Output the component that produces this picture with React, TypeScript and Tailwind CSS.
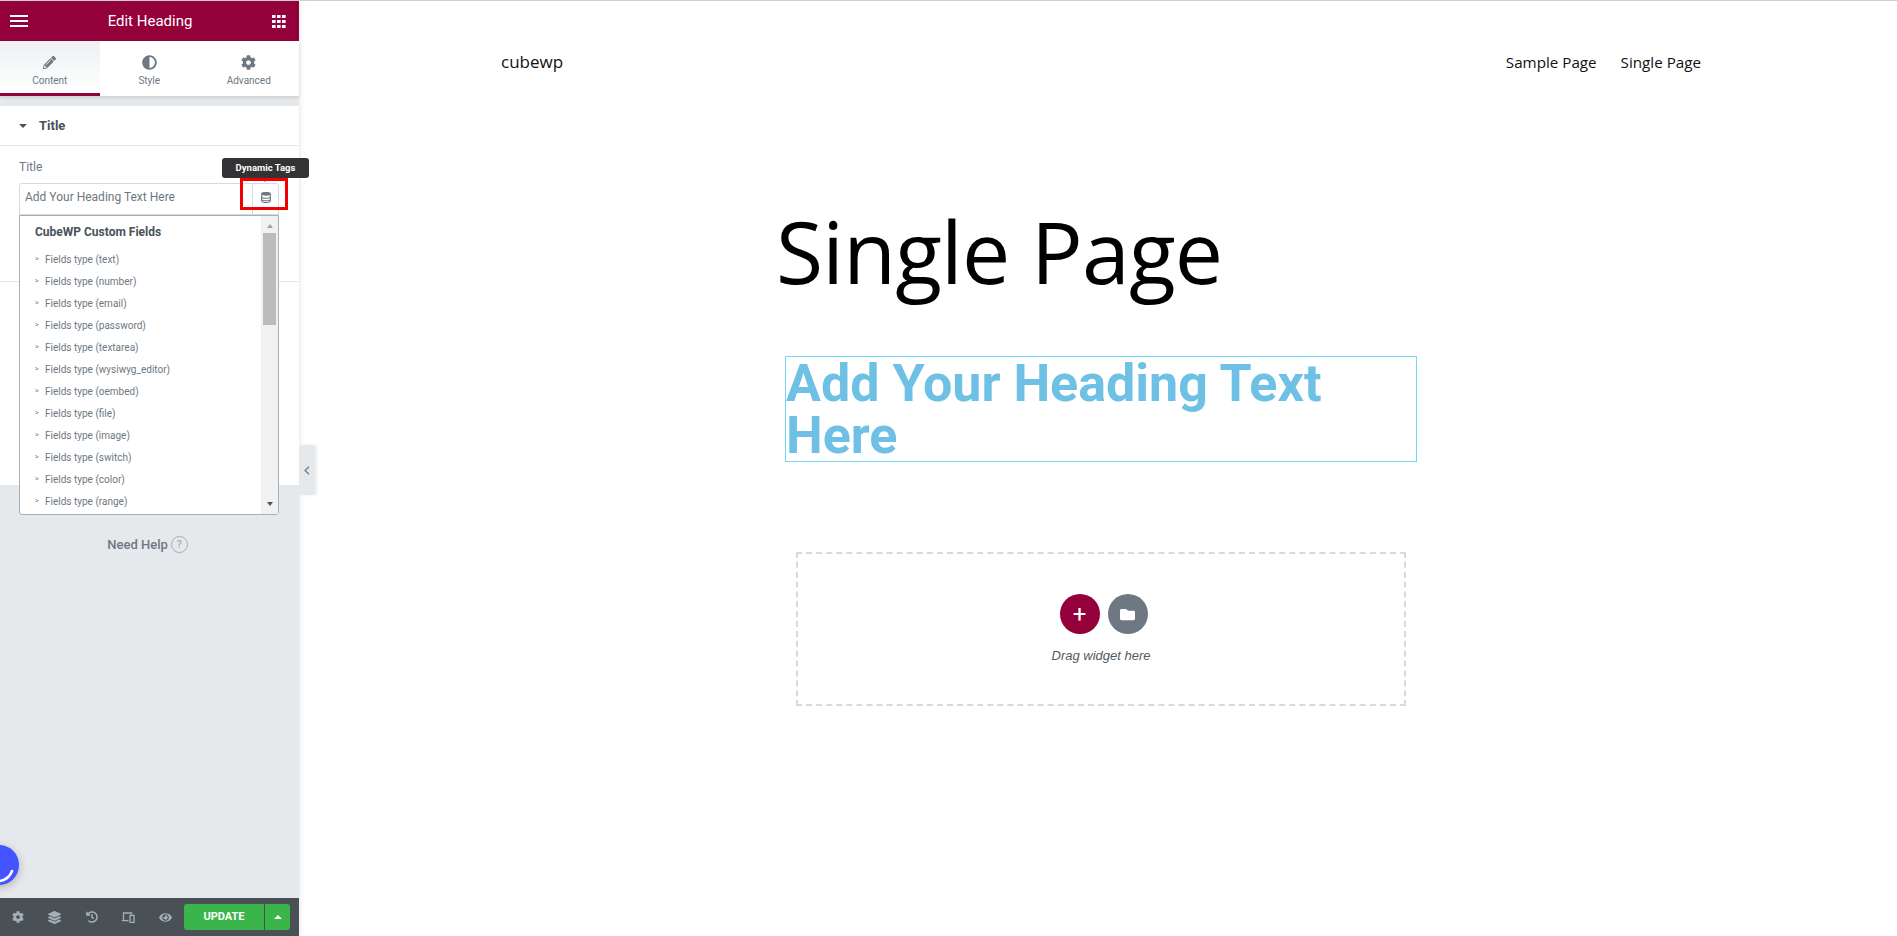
import { FaAdjust, FaCog, FaEye, FaFolder, FaHistory, FaLayerGroup, FaPencilAlt } from "react-icons/fa";

const fieldTypes = [
  "text",
  "number",
  "email",
  "password",
  "textarea",
  "wysiwyg_editor",
  "oembed",
  "file",
  "image",
  "switch",
  "color",
  "range",
];

function GridIcon() {
  return (
    <svg width="14" height="13" viewBox="0 0 14 13" fill="#fff">
      {[0, 5, 10].map((y) =>
        [0, 5, 10].map((x) => <rect key={`${x}-${y}`} x={x} y={y} width="3.6" height="3" />)
      )}
    </svg>
  );
}

function DevicesIcon() {
  return (
    <svg width="13" height="11" viewBox="0 0 13 11" fill="none" stroke="#a4afb7" strokeWidth="1.3">
      <path d="M1.5 8V1h8v1.5" />
      <path d="M0 8.6h6.5" />
      <rect x="8" y="3.4" width="4" height="7" />
    </svg>
  );
}

function StackIcon() {
  return (
    <svg width="10" height="11" viewBox="0 0 10 11" fill="none" stroke="#6d7882" strokeWidth="1.1">
      <ellipse cx="5" cy="1.8" rx="4.3" ry="1.3" fill="#6d7882" />
      <path d="M.7 2v7c0 .9 1.9 1.5 4.3 1.5S9.300 9.900 9.300 9V2" />
      <path d="M.7 4.700c0 .9 1.900 1.500 4.300 1.500s4.300-.6 4.300-1.500" />
      <path d="M.7 7.200c0 .9 1.900 1.500 4.300 1.500s4.300-.6 4.300-1.500" />
    </svg>
  );
}

function Tab({ label, active, icon }: { label: string; active?: boolean; icon: React.ReactNode }) {
  return (
    <div
      className={`flex h-[55px] w-[99.5px] flex-col items-center pt-[13px] text-[#6d7882] ${
        active ? "border-b-[3px] border-[#93003a] bg-gradient-to-b from-[#eef0f2] to-white" : ""
      }`}
    >
      <div className="flex h-[16px] items-center text-[15px]">{icon}</div>
      <span className="mt-[5px] text-[10px] leading-[12px]">{label}</span>
    </div>
  );
}

function Sidebar() {
  return (
    <aside className="relative flex h-[935px] w-[299px] shrink-0 flex-col bg-[#e6e9ec] shadow-[0_0_6px_rgba(0,0,0,0.12)]">
      <header className="flex h-[40px] shrink-0 items-center justify-between bg-[#93003a] pl-[10px] pr-[13px] text-white">
        <div className="flex w-[18px] flex-col gap-[3px]">
          <span className="h-[2px] bg-white" />
          <span className="h-[2px] bg-white" />
          <span className="h-[2px] bg-white" />
        </div>
        <span className="text-[15px] leading-none">Edit Heading</span>
        <GridIcon />
      </header>

      <nav className="flex h-[55px] shrink-0 bg-white shadow-[0_2px_3px_rgba(0,0,0,0.1)]">
        <Tab label="Content" active icon={<FaPencilAlt className="text-[13px]" />} />
        <Tab label="Style" icon={<FaAdjust />} />
        <Tab label="Advanced" icon={<FaCog />} />
      </nav>

      <section className="mt-[10px] h-[379px] shrink-0 bg-white">
        <div className="flex h-[40px] items-center border-b border-[#e6e9ec] pl-[19px] text-[#495157]">
          <span className="mr-[12px] h-0 w-0 border-x-[4px] border-t-[4px] border-x-transparent border-t-[#495157]" />
          <span className="text-[13px] font-bold leading-none">Title</span>
        </div>
        <p className="mt-[13px] pl-[19px] text-[12px] leading-[16px] text-[#6d7882]">Title</p>
        <div className="mt-[8px] ml-[19px] flex h-[32px] w-[260px] rounded-t-[3px] border border-[#d5dadf] text-[12px] text-[#6d7882]">
          <span className="flex-1 pl-[5px] leading-[26px]">Add Your Heading Text Here</span>
          <span className="flex w-[26px] justify-center border-l border-[#d5dadf] pt-[8px]">
            <StackIcon />
          </span>
        </div>
        <div className="mt-[66px] border-t border-[#e6e9ec]" />
      </section>

      <button className="mx-auto mt-[50px] flex items-center gap-[3px] pr-[4px] text-[13px] font-medium text-[#6d7882]">
        Need Help
        <span className="flex h-[17px] w-[17px] items-center justify-center rounded-full border-[1.5px] border-[#a4afb7] text-[11px] text-[#a4afb7]">
          ?
        </span>
      </button>

      <footer className="mt-auto flex h-[38px] shrink-0 items-center bg-[#495157] pl-[12px] text-[#a4afb7]">
        <div className="flex w-[172px] items-center">
          <span className="w-[36px]"><FaCog className="text-[12px]" /></span>
          <span className="w-[38px]"><FaLayerGroup className="text-[13px]" /></span>
          <span className="w-[36px]"><FaHistory className="text-[12px]" /></span>
          <span className="w-[37px]"><DevicesIcon /></span>
          <span className="w-[25px]"><FaEye className="text-[13px]" /></span>
        </div>
        <div className="flex h-[26px] text-white">
          <span className="flex w-[80px] items-center justify-center rounded-l-[3px] bg-[#39b54a] text-[11px] font-bold">UPDATE</span>
          <span className="ml-px flex w-[25px] items-center justify-center rounded-r-[3px] bg-[#39b54a]">
            <span className="h-0 w-0 border-x-[4px] border-b-[4px] border-x-transparent border-b-white" />
          </span>
        </div>
      </footer>

      {/* dropdown of dynamic tags, sits over the panel */}
      <div className="absolute left-[19px] top-[214px] flex h-[300px] w-[260px] rounded-b-[3px] border border-[#a4afb7] bg-white">
        <div className="flex-1 pl-[15px]">
          <p className="mt-[8px] text-[12px] font-bold leading-[16px] text-[#495157]">CubeWP Custom Fields</p>
          <ul className="mt-[8px]">
            {fieldTypes.map((t) => (
              <li key={t} className="flex h-[22px] items-center text-[10px] text-[#6d7882]">
                <span className="w-[10px] text-[7px]">&gt;</span>
                Fields type ({t})
              </li>
            ))}
          </ul>
        </div>
        <div className="flex w-[17px] flex-col items-center bg-[#f1f1f1]">
          <span className="mt-[8px] h-0 w-0 border-x-[3.5px] border-b-[4px] border-x-transparent border-b-[#a3a3a3]" />
          <span className="mt-[5px] h-[92px] w-[13px] bg-[#bcbcbc]" />
          <span className="mt-auto mb-[8px] h-0 w-0 border-x-[3.5px] border-t-[4px] border-x-transparent border-t-[#505050]" />
        </div>
      </div>

      <div className="absolute left-[222px] top-[157px] h-[20px] w-[87px] whitespace-nowrap rounded-[3px] bg-[#333] text-center text-[9.500px] font-bold leading-[20px] text-white">
        Dynamic Tags
        <span className="absolute left-[40px] top-[20px] h-0 w-0 border-x-[3px] border-t-[4px] border-x-transparent border-t-[#333]" />
      </div>
      <div className="absolute left-[240px] top-[177px] h-[32px] w-[48px] border-[3px] border-[#f00000]" />

      <div className="absolute left-[299px] top-[444px] flex h-[50px] w-[16px] items-center justify-center bg-[#e6e9ec] shadow-[2px_0_3px_rgba(0,0,0,0.08)]">
        <svg width="6" height="9" viewBox="0 0 6 9" fill="none" stroke="#6d7882" strokeWidth="1.2">
          <path d="M5 .7 1 4.500 5 8.300" />
        </svg>
      </div>

      <div className="absolute bottom-[51px] left-[-21px] h-[40px] w-[40px] overflow-hidden rounded-full bg-[#4353ff] shadow-[0_2px_8px_rgba(0,0,0,0.25)]">
        <svg width="40" height="40" viewBox="0 0 40 40" fill="none" stroke="#fff" strokeWidth="2.500" strokeLinecap="round">
          <path d="M33 26c-2 6-7 9-12 10" />
        </svg>
      </div>
    </aside>
  );
}

export default function App() {
  return (
    <div className="h-[936px] overflow-hidden border-t border-[#d0d0d0] bg-white font-['Roboto',sans-serif]">
      <div className="flex">
        <Sidebar />
        <main className="min-w-0 flex-1 pl-[202px]">
          <div className="flex w-[1200px] items-center justify-between pt-[51px] font-['Open_Sans',sans-serif] leading-[20px] text-[#111]">
            <span className="text-[17px]">cubewp</span>
            <div className="flex gap-[24px] text-[15.200px]">
              <span>Sample Page</span>
              <span>Single Page</span>
            </div>
          </div>
          <h1 className="mt-[129px] pl-[275px] font-['Open_Sans',sans-serif] text-[86px] font-normal leading-[100px] tracking-[-0.800px] text-black">
            Single Page
          </h1>
          <div className="ml-[284px] mt-[55px] h-[106px] w-[632px] border border-[#71d7f7]">
            <h2 className="pt-[1px] text-[52px] font-bold leading-[52px] text-[#6ec1e4]">Add Your Heading Text Here</h2>
          </div>
          <div className="ml-[295px] mt-[90px] flex h-[154px] w-[610px] flex-col items-center border-2 border-dashed border-[#d5dadf] pt-[40px]">
            <div className="ml-[5px] flex gap-[8px]">
              <span className="flex h-[40px] w-[40px] items-center justify-center rounded-full bg-[#93003a] text-[24px] leading-none text-white">+</span>
              <span className="flex h-[40px] w-[40px] items-center justify-center rounded-full bg-[#6d7882] text-[15px] text-white"><FaFolder /></span>
            </div>
            <p className="mt-[14px] font-['Liberation_Sans',sans-serif] text-[13px] italic leading-[16px] text-[#54595f]">Drag widget here</p>
          </div>
        </main>
      </div>
    </div>
  );
}
